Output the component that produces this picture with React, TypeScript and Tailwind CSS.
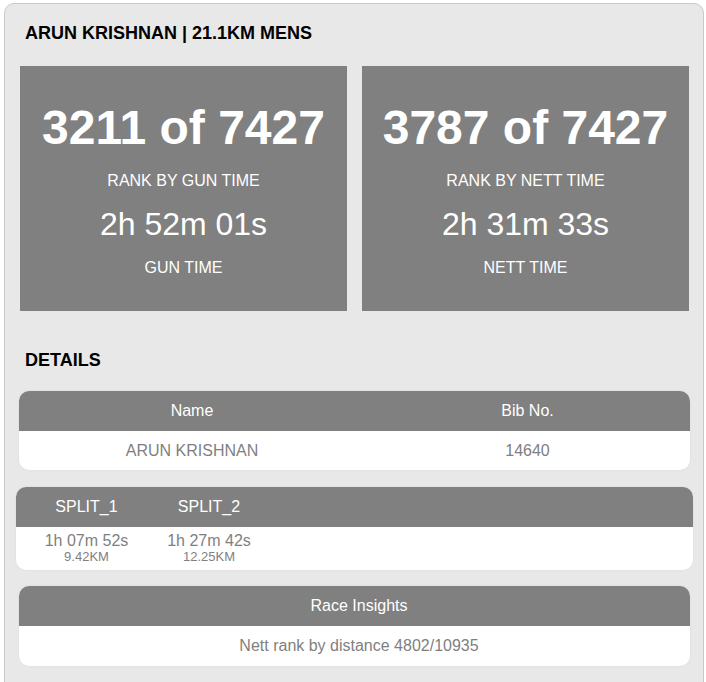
import React from 'react';

const stats = [
  { rank: '3211 of 7427', rankLabel: 'RANK BY GUN TIME', time: '2h 52m 01s', timeLabel: 'GUN TIME' },
  { rank: '3787 of 7427', rankLabel: 'RANK BY NETT TIME', time: '2h 31m 33s', timeLabel: 'NETT TIME' },
];

const splits = [
  { label: 'SPLIT_1', time: '1h 07m 52s', dist: '9.42KM' },
  { label: 'SPLIT_2', time: '1h 27m 42s', dist: '12.25KM' },
];

export default function App() {
  return (
    <div className="min-h-screen bg-white pt-[3px] pl-[4px] font-['Liberation_Sans',Arial,sans-serif]">
      <div className="w-[700px] h-[700px] rounded-[10px] border border-[#c9c9c9] bg-[#e8e8e8]">
        {/* Heading */}
        <h1 className="pt-[18px] pl-[20px] text-[18px] leading-[22px] font-bold text-black">
          ARUN KRISHNAN | 21.1KM MENS
        </h1>

        {/* Rank boxes */}
        <div className="mt-[22px] ml-[15px] w-[669px] grid grid-cols-2 gap-[15px]">
          {stats.map(s => (
            <div key={s.rankLabel} className="bg-[#808080] text-white text-center pt-[38px] pb-[31px]">
              <div className="text-[48px] leading-[48px] font-bold">{s.rank}</div>
              <div className="mt-[17px] text-[16px] leading-[24px]">{s.rankLabel}</div>
              <div className="mt-[11px] text-[32px] leading-[40px]">{s.time}</div>
              <div className="mt-[12px] text-[16px] leading-[24px]">{s.timeLabel}</div>
            </div>
          ))}
        </div>

        <h2 className="mt-[38px] pl-[20px] text-[18px] leading-[22px] font-bold text-black">DETAILS</h2>

        {/* Name / Bib */}
        <div className="mt-[20px] ml-[14px] w-[671px] rounded-[10px] overflow-hidden bg-white text-[16px] shadow-[0_0_2px_rgba(0,0,0,0.08)]">
          <div className="grid grid-cols-[346px_1fr] h-[40px] items-center bg-[#808080] text-white text-center">
            <span>Name</span>
            <span>Bib No.</span>
          </div>
          <div className="grid grid-cols-[346px_1fr] h-[39px] items-center text-[#7f7f7f] text-center">
            <span>ARUN KRISHNAN</span>
            <span>14640</span>
          </div>
        </div>

        {/* Splits */}
        <div className="mt-[17px] ml-[11px] w-[677px] rounded-[10px] overflow-hidden bg-white shadow-[0_0_2px_rgba(0,0,0,0.08)]">
          <div className="grid grid-cols-[141px_104px_1fr] h-[40px] items-center bg-[#808080] text-white text-center text-[16px]">
            {splits.map(s => (
              <span key={s.label}>{s.label}</span>
            ))}
          </div>
          <div className="grid grid-cols-[141px_104px_1fr] h-[43px] pt-[6px] text-[#7f7f7f] text-center">
            {splits.map(s => (
              <div key={s.label}>
                <div className="text-[16px] leading-[16px]">{s.time}</div>
                <div className="text-[13px] leading-[15px]">{s.dist}</div>
              </div>
            ))}
          </div>
        </div>

        {/* Insights */}
        <div className="mt-[16px] ml-[14px] w-[671px] rounded-[10px] overflow-hidden bg-white text-[16px] text-center shadow-[0_0_2px_rgba(0,0,0,0.08)]">
          <div className="h-[40px] flex items-center justify-center pl-[9px] bg-[#808080] text-white">Race Insights</div>
          <div className="h-[40px] flex items-center justify-center pl-[9px] text-[#7f7f7f]">Nett rank by distance 4802/10935</div>
        </div>
      </div>
    </div>
  );
}
